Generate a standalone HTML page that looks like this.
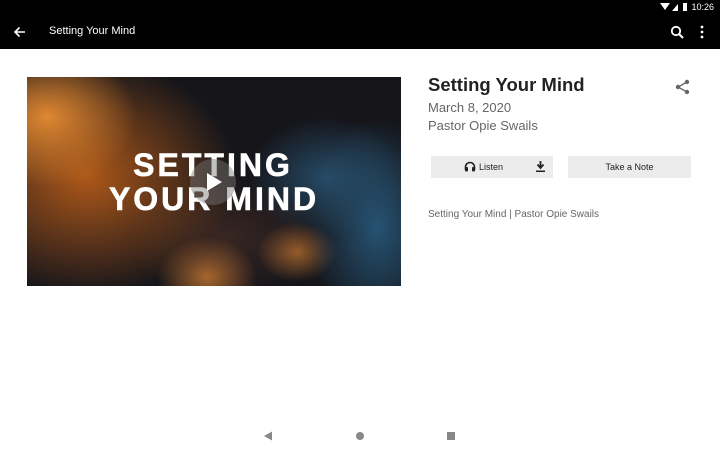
<!DOCTYPE html>
<html><head><style>
*{margin:0;padding:0;box-sizing:border-box}
body{width:720px;height:450px;background:#fff;font-family:"Liberation Sans",sans-serif;position:relative;overflow:hidden}
.bar{position:absolute;left:0;top:0;width:720px;height:49px;background:#000}
.abs{position:absolute}
.img{left:27px;top:77px;width:374px;height:209px;overflow:hidden;
background:
radial-gradient(ellipse 90px 70px at 20px 40px,rgba(230,140,50,.95),rgba(230,140,50,0) 100%),
radial-gradient(ellipse 150px 120px at 60px 100px,rgba(190,95,25,.9),rgba(190,95,25,0) 100%),
radial-gradient(ellipse 80px 60px at 300px 100px,rgba(40,80,110,.9),rgba(40,80,110,0)),
radial-gradient(ellipse 70px 110px at 350px 150px,rgba(40,90,125,.9),rgba(40,90,125,0)),
radial-gradient(ellipse 50px 40px at 180px 200px,rgba(200,120,50,.8),rgba(200,120,50,0)),
radial-gradient(ellipse 40px 30px at 270px 175px,rgba(200,120,50,.7),rgba(200,120,50,0)),
radial-gradient(ellipse 100px 60px at 200px 160px,rgba(60,40,35,.9),rgba(60,40,35,0)),
#15151a}
.t{position:absolute;left:0;width:374px;text-align:center;color:#fff;font-weight:bold;font-size:32px;letter-spacing:3px;line-height:34px;-webkit-text-stroke:0.6px #fff}
</style></head><body>
<div class="bar"></div>
<div class="abs" style="right:6px;top:2px;color:#fff;font-size:9px">10:26</div>
<svg class="abs" style="left:660px;top:2px" width="30" height="10"><path d="M0 1 L10 1 L5 8 Z" fill="#fff"/><path d="M12 9 L18 2 L18 9Z" fill="#fff"/><rect x="23" y="1" width="4" height="8" fill="#fff"/></svg>
<svg class="abs" style="left:13px;top:25px" width="14" height="14"><path d="M12 7H2M6.5 2.5L2 7l4.5 4.5" stroke="#fff" stroke-width="1.6" fill="none"/></svg>
<div class="abs" style="left:49px;top:25px;color:#fff;font-size:11px">Setting Your Mind</div>
<svg class="abs" style="left:670px;top:25px" width="14" height="14"><circle cx="6" cy="6" r="4.2" stroke="#fff" stroke-width="1.8" fill="none"/><path d="M9 9l4 4" stroke="#fff" stroke-width="2"/></svg>
<svg class="abs" style="left:700px;top:25px" width="4" height="14"><circle cx="2" cy="2" r="1.4" fill="#fff"/><circle cx="2" cy="7" r="1.4" fill="#fff"/><circle cx="2" cy="12" r="1.4" fill="#fff"/></svg>

<div class="abs img">
<div class="t" style="top:71px;left:-1px">SETTING</div>
<div class="t" style="top:105px">YOUR MIND</div>
<div class="abs" style="left:163px;top:82px;width:46px;height:46px;border-radius:50%;background:rgba(120,120,120,.45)"></div>
<svg class="abs" style="left:179px;top:95px" width="18" height="20"><path d="M1 1L16 10L1 19Z" fill="#fff"/></svg>
</div>

<div class="abs" style="left:428px;top:74px;font-size:18.5px;font-weight:bold;color:#222">Setting Your Mind</div>
<svg class="abs" style="left:675px;top:79px" width="16" height="16"><circle cx="12" cy="3" r="2.2" fill="#666"/><circle cx="3" cy="8" r="2.2" fill="#666"/><circle cx="12" cy="13" r="2.2" fill="#666"/><path d="M12 3L3 8L12 13" stroke="#666" stroke-width="1.3" fill="none"/></svg>
<div class="abs" style="left:428px;top:100px;font-size:13px;color:#666">March 8, 2020</div>
<div class="abs" style="left:428px;top:118px;font-size:13px;color:#666">Pastor Opie Swails</div>

<div class="abs" style="left:431px;top:156px;width:122px;height:22px;background:#ececec"></div>
<svg class="abs" style="left:464px;top:161px" width="12" height="11"><path d="M1.5 9V6a4.5 4.5 0 0 1 9 0v3" stroke="#222" stroke-width="1.6" fill="none"/><rect x="1" y="6" width="3" height="4.5" rx="1" fill="#222"/><rect x="8" y="6" width="3" height="4.5" rx="1" fill="#222"/></svg>
<div class="abs" style="left:479px;top:162px;font-size:9px;color:#222">Listen</div>
<svg class="abs" style="left:535px;top:160px" width="11" height="13"><path d="M5.5 1v6M2.5 4.5l3 3.5 3-3.5" stroke="#222" stroke-width="1.8" fill="none"/><rect x="1" y="10.5" width="9" height="1.5" fill="#222"/></svg>
<div class="abs" style="left:568px;top:156px;width:123px;height:22px;background:#ececec;font-size:9px;color:#222;text-align:center;line-height:22px">Take a Note</div>

<div class="abs" style="left:428px;top:209px;font-size:10px;color:#666">Setting Your Mind | Pastor Opie Swails</div>

<svg class="abs" style="left:263px;top:431px" width="10" height="10"><path d="M9 0.5L1 5L9 9.5Z" fill="#888"/></svg>
<div class="abs" style="left:356px;top:432px;width:8px;height:8px;border-radius:50%;background:#888"></div>
<div class="abs" style="left:447px;top:432px;width:8px;height:8px;background:#888"></div>
</body></html>
